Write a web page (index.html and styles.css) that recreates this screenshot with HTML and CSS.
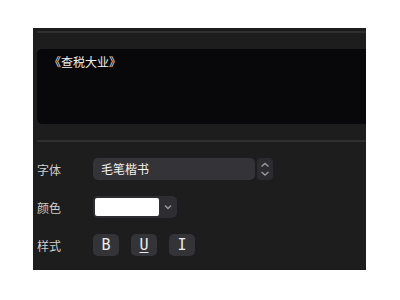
FILE: index.html
```html
<!DOCTYPE html>
<html lang="zh">
<head>
    <meta charset="UTF-8">
    <title>文字样式</title>
    <link rel="stylesheet" href="styles.css">
</head>
<body>
    <div class="panel">
        <div class="rule"></div>
        <div class="preview">《查税大业》</div>
        <div class="rule gap"></div>

        <div class="form">
            <div class="row">
                <label>字体</label>
                <div class="select">毛笔楷书</div>
                <div class="spinner">
                    <svg width="16" height="22" viewBox="0 0 16 22">
                        <path d="M4.5 8.5 L8 5.5 L11.5 8.5" fill="none" stroke="#9a9a9e" stroke-width="1.4"/>
                        <path d="M4.5 14 L8 17 L11.5 14" fill="none" stroke="#9a9a9e" stroke-width="1.4"/>
                    </svg>
                </div>
            </div>
            <div class="row">
                <label>颜色</label>
                <div class="color">
                    <span class="swatch"></span>
                    <svg width="18" height="22" viewBox="0 0 18 22">
                        <path d="M6 9.5 L9 12.5 L12 9.5" fill="none" stroke="#9a9a9e" stroke-width="1.4"/>
                    </svg>
                </div>
            </div>
            <div class="row">
                <label>样式</label>
                <div class="styles">
                    <button class="btn">B</button>
                    <button class="btn under">U</button>
                    <button class="btn">I</button>
                </div>
            </div>
        </div>
    </div>
</body>
</html>
```

FILE: styles.css
```css
body {
    margin: 0;
    background: #ffffff;
    font-family: "Noto Sans CJK SC", "Noto Sans", sans-serif;
    font-size: 12px;
}

.panel {
    margin: 28px 0 0 33px;
    width: 333px;
    height: 242px;
    box-sizing: border-box;
    padding: 3px 0 0 4px;
    background-color: #1d1d1d;
    overflow: hidden;
}

.rule {
    width: 400px;
    height: 2px;
    background-color: #2f2f2f;
}

.rule.gap {
    margin-top: 16px;
}

.preview {
    margin-top: 16px;
    width: 400px;
    height: 75px;
    box-sizing: border-box;
    padding: 5px 12px;
    background-color: #08080a;
    border-radius: 5px;
    color: #f0f0f0;
    line-height: 16px;
}

.form {
    display: flex;
    flex-direction: column;
    gap: 16px;
    margin-top: 16px;
}

.row {
    display: flex;
    align-items: center;
    height: 22px;
}

.row label {
    width: 56px;
    color: #cfcfcf;
}

.select {
    width: 162px;
    height: 22px;
    box-sizing: border-box;
    padding-left: 8px;
    line-height: 22px;
    background-color: #343438;
    border-radius: 5px;
    color: #f2f2f2;
}

.spinner {
    margin-left: 2px;
    width: 16px;
    height: 22px;
    background-color: #2c2c30;
    border-radius: 4px;
}

.spinner svg {
    display: block;
}

.color {
    display: flex;
    align-items: center;
    width: 84px;
    height: 22px;
    box-sizing: border-box;
    padding-left: 2px;
    background-color: #2e2e32;
    border-radius: 5px;
}

.swatch {
    width: 64px;
    height: 18px;
    background-color: #ffffff;
    border-radius: 2px;
}

.color svg {
    display: block;
}

.styles {
    display: flex;
    gap: 12px;
}

.btn {
    width: 26px;
    height: 22px;
    padding: 0;
    border: none;
    border-radius: 5px;
    background-color: #343438;
    color: #ececec;
    font-family: "DejaVu Sans Mono", monospace;
    font-size: 15px;
    line-height: 22px;
}

.btn.under {
    text-decoration: underline;
    text-underline-offset: 2px;
}
```
